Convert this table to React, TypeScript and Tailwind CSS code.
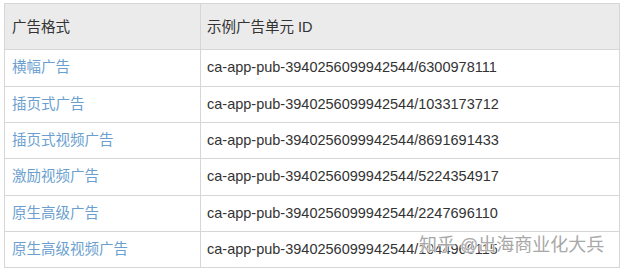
import React from 'react';

type AdRow = {
  format: string;
  unitId: string;
  height: string;
};

const rows: AdRow[] = [
  { format: '横幅广告', unitId: 'ca-app-pub-3940256099942544/6300978111', height: 'h-[37px]' },
  { format: '插页式广告', unitId: 'ca-app-pub-3940256099942544/1033173712', height: 'h-[36px]' },
  { format: '插页式视频广告', unitId: 'ca-app-pub-3940256099942544/8691691433', height: 'h-[36px]' },
  { format: '激励视频广告', unitId: 'ca-app-pub-3940256099942544/5224354917', height: 'h-[37px]' },
  { format: '原生高级广告', unitId: 'ca-app-pub-3940256099942544/2247696110', height: 'h-[36px]' },
  { format: '原生高级视频广告', unitId: 'ca-app-pub-3940256099942544/1044960115', height: 'h-[36px]' },
];

const App = () => {
  return (
    <main
      className="w-[625px] h-[272px] bg-white overflow-hidden pt-[3px] pl-[4px] relative"
      style={{ fontFamily: '"Liberation Sans", "Noto Sans CJK SC", Arial, sans-serif' }}
    >
      <div className="w-[616px] border-l border-r border-[#d6d6d6] text-[14.5px] text-[#333]">
        {/* header */}
        <div className="flex h-[47px] bg-[#ebebeb] border-t border-b border-[#d6d6d6]">
          <div className="w-[196px] border-r border-[#d6d6d6] pl-[7px] pt-[15px] leading-[17px]">广告格式</div>
          <div className="flex-1 pl-[6px] pt-[15px] leading-[17px]">示例广告单元 ID</div>
        </div>
        {rows.map((row) => (
          <div key={row.format} className={`flex ${row.height} border-b border-[#d6d6d6]`}>
            <div className="w-[196px] border-r border-[#d6d6d6] pl-[7px] pt-[9px] leading-[17px] text-[#6b9fd0]">
              {row.format}
            </div>
            <div className="flex-1 pl-[6px] pt-[9px] leading-[17px]">{row.unitId}</div>
          </div>
        ))}
      </div>

      {/* watermark */}
      <div
        className="absolute left-[419px] top-[235px] text-[18px] leading-[20px] text-[#a8a8a8] whitespace-nowrap"
        style={{ textShadow: '0 0 2px #fff, 0 0 2px #fff, 0 0 1px #fff' }}
      >
        知乎 @出海商业化大兵
      </div>
    </main>
  );
};

export default App;
